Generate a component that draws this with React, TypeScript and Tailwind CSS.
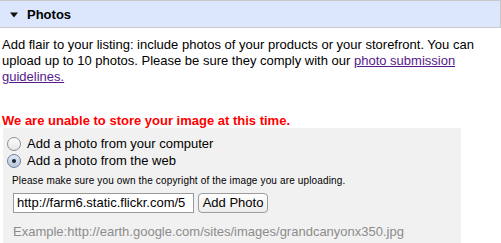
export default function App() {
  return (
    <div
      className="w-[501px] h-[243px] overflow-hidden bg-white text-black"
      style={{ fontFamily: '"Liberation Sans", Arial, sans-serif' }}
    >
      {/* Section header */}
      <div className="h-[28px] border-t border-b border-r border-[#c9c9c9] bg-[#dce6fc] flex items-center pl-[10px]">
        <svg width="8" height="6" viewBox="0 0 8 6" className="mt-[1px]">
          <path d="M0 0.5h8L4 5.5z" fill="#111" />
        </svg>
        <span className="ml-[9px] text-[13px] font-bold leading-none">Photos</span>
      </div>

      <p className="mt-[9px] pl-[2px] w-[492px] text-[13px] leading-[16px]">
        Add flair to your listing: include photos of your products or your storefront. You can upload up to 10 photos.
        Please be sure they comply with our{" "}
        <a href="#" className="text-[#551a8b] underline">
          photo submission guidelines.
        </a>
      </p>

      <div className="mt-[28px] pl-[2px] text-[13px] leading-[15px] font-bold text-[#f00]">
        We are unable to store your image at this time.
      </div>

      <div className="ml-[3px] w-[458px] h-[120px] bg-[#f1f1f1] pt-[7px]">
        <label className="flex items-center h-[17px] pl-[4px] text-[13px]">
          <span className="w-[14px] h-[14px] rounded-full border border-[#8c8c8c] bg-gradient-to-b from-white to-[#e4e4e4]" />
          <span className="ml-[6px]">Add a photo from your computer</span>
        </label>
        <label className="flex items-center h-[17px] pl-[4px] text-[13px]">
          <span className="w-[14px] h-[14px] rounded-full border border-[#6f7f99] bg-gradient-to-b from-[#dfe8f5] to-[#b9c8de] flex items-center justify-center">
            <span className="w-[4px] h-[4px] rounded-full bg-[#1c2430]" />
          </span>
          <span className="ml-[6px]">Add a photo from the web</span>
        </label>

        <div className="mt-[5px] pl-[9px] text-[10px] leading-[14px] tracking-[0.15px]">
          Please make sure you own the copyright of the image you are uploading.
        </div>

        <div className="mt-[5px] pl-[10px] flex items-center gap-[4px]">
          <div className="w-[181px] h-[20px] border border-[#9a9a9a] bg-white overflow-hidden whitespace-nowrap pl-[3px] text-[13px] leading-[18px]">
            http://farm6.static.flickr.com/5
          </div>
          <button className="w-[70px] h-[20px] rounded-[4px] border border-[#9c9c9c] bg-gradient-to-b from-white to-[#ececec] text-[13px] leading-[18px]">
            Add Photo
          </button>
        </div>

        <div className="mt-[11px] pl-[10px] text-[13px] leading-[16px] text-[#8c8c8c] whitespace-nowrap">
          Example:http://earth.google.com/sites/images/grandcanyonx350.jpg
        </div>
      </div>
    </div>
  );
}
